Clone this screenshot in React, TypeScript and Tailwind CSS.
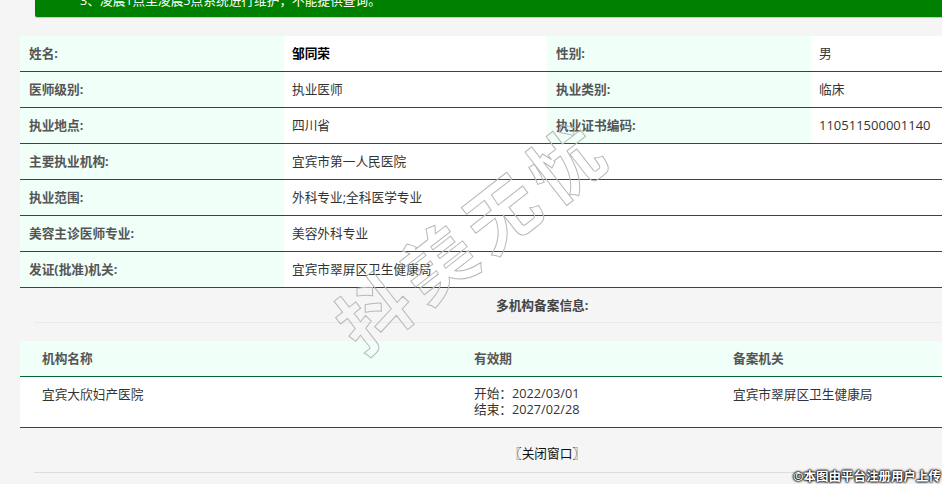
import React from 'react';

const FONT = "font-['Open_Sans','Noto_Sans_CJK_SC',sans-serif]";

const topRows = [
  ['姓名:', '邹同荣', '性别:', '男'],
  ['医师级别:', '执业医师', '执业类别:', '临床'],
  ['执业地点:', '四川省', '执业证书编码:', '110511500001140'],
];

const wideRows = [
  ['主要执业机构:', '宜宾市第一人民医院'],
  ['执业范围:', '外科专业;全科医学专业'],
  ['美容主诊医师专业:', '美容外科专业'],
  ['发证(批准)机关:', '宜宾市翠屏区卫生健康局'],
];

const Label: React.FC<{ text: string }> = ({ text }) => (
  <div className="w-[263.5px] shrink-0 bg-[#f0fff8] pl-[9px] pt-[7px] font-bold text-[#555]">{text}</div>
);

const Value: React.FC<{ text: string; strong?: boolean }> = ({ text, strong }) => (
  <div
    className={`w-[263.5px] shrink-0 bg-white pl-[8.5px] pt-[7px] ${strong ? 'font-bold text-black' : 'text-[#333]'} ${/^\d+$/.test(text) ? 'text-[13px]' : ''}`}
  >
    {text}
  </div>
);

export default function App() {
  return (
    <div className={`relative h-[484px] w-[942px] overflow-hidden bg-[#f5f5f5] text-[12.7px] leading-[20px] ${FONT}`}>
      <div className="ml-[35px] flex h-[17px] w-[1000px] items-end rounded-b-[2px] bg-[#008000] pb-[7px] pl-[45px] text-white shadow-[0_1px_1px_rgba(0,0,0,0.2)]">
        <span className="whitespace-nowrap">3、凌晨1点至凌晨5点系统进行维护，不能提供查询。</span>
      </div>

      <div className="ml-[20px] mt-[19px] w-[1054px]">
        {topRows.map((row) => (
          <div key={row[0]} className="flex h-[36px] border-b border-[#145a32]">
            <Label text={row[0]} />
            <Value text={row[1]} strong={row[0] === '姓名:'} />
            <Label text={row[2]} />
            <Value text={row[3]} />
          </div>
        ))}
        {wideRows.map((row) => (
          <div key={row[0]} className="flex h-[36px] border-b border-[#145a32] bg-white">
            <Label text={row[0]} />
            <Value text={row[1]} />
          </div>
        ))}
      </div>

      <div className="ml-[34px] h-[35px] w-[1020px] border-b border-[#eaeaea] pl-[462px] pt-[7px] font-bold text-[#444]">
        多机构备案信息:
      </div>

      <div className="ml-[20px] mt-[18px] w-[1054px]">
        <div className="flex h-[36px] border-b border-[#006633] bg-[#f0fff8] pt-[7px] font-bold text-[#555]">
          <div className="w-[432px] pl-[22px]">机构名称</div>
          <div className="w-[259px] pl-[22px]">有效期</div>
          <div className="pl-[22px]">备案机关</div>
        </div>
        <div className="flex h-[51px] border-b border-[#145a32] bg-white pt-[7px] text-[#333]">
          <div className="w-[432px] pl-[22px]">宜宾大欣妇产医院</div>
          <div className="w-[259px] pl-[22px] pt-[1px] leading-[16px]">
            <div>开始：2022/03/01</div>
            <div>结束：2027/02/28</div>
          </div>
          <div className="pl-[22px]">宜宾市翠屏区卫生健康局</div>
        </div>
      </div>

      <div className="ml-[34px] h-[45px] w-[1020px] border-b border-[#dddddd] pl-[475px] pt-[15px] text-[#111]">
        〖关闭窗口〗
      </div>

      {/* watermark */}
      <div className="pointer-events-none absolute left-[311px] top-[190px] rotate-[-38deg] whitespace-nowrap text-[72px] font-bold leading-[90px] tracking-[9px] text-transparent [-webkit-text-stroke:1px_#b8b8b8]">
        抖美无忧
      </div>
      <div className="absolute bottom-[-1px] right-[1px] whitespace-nowrap text-[12.5px] font-bold leading-[16px] text-white [text-shadow:0_0_1px_#000,0_0_2px_#000,0_0_2px_#000,0_0_3px_#000]">
        ©本图由平台注册用户上传
      </div>
    </div>
  );
}
